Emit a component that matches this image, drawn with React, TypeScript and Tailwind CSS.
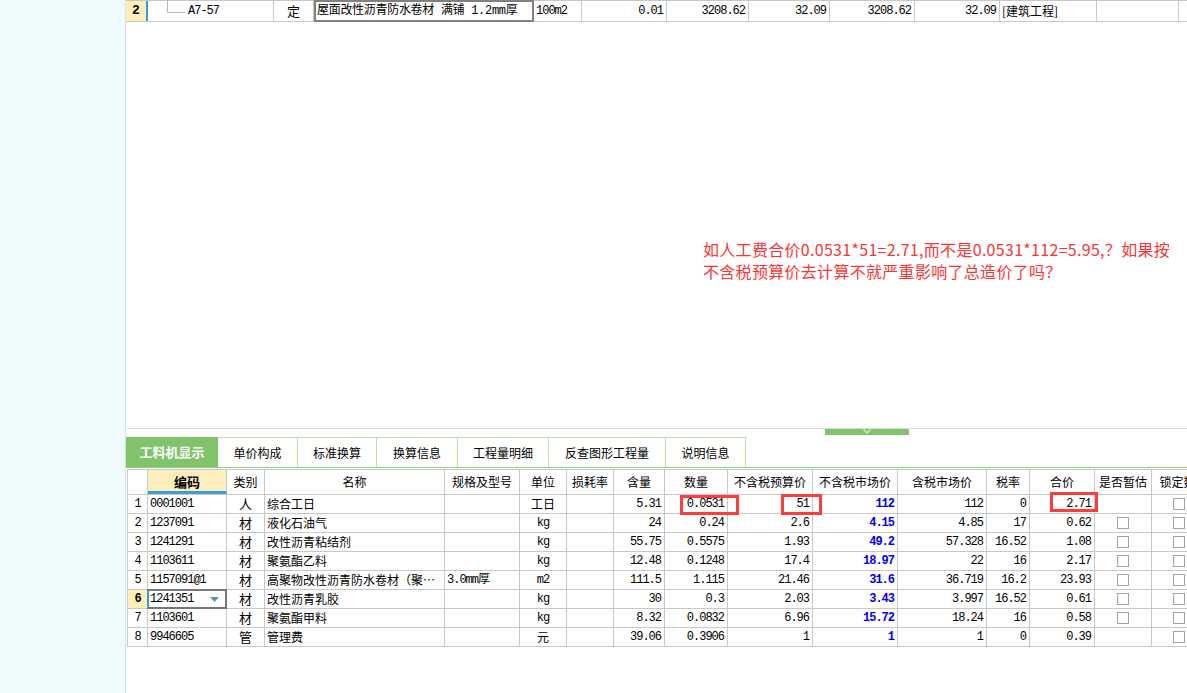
import React from "react";

const cjk = "font-['Noto_Sans_CJK_SC',sans-serif]";
const mono = "font-['Liberation_Mono','Noto_Sans_CJK_SC',monospace] text-[12px] tracking-[-1px]";
const line = "border-[#c8c8c8]";

type Row = {
  n: number;
  code: string;
  type: string;
  name: string;
  spec: string;
  unit: string;
  hl: string;
  qty: string;
  budget: string;
  market: string;
  taxMarket: string;
  rate: string;
  total: string;
  est: boolean;
};

const rows: Row[] = [
  { n: 1, code: "0001001", type: "人", name: "综合工日", spec: "", unit: "工日", hl: "5.31", qty: "0.0531", budget: "51", market: "112", taxMarket: "112", rate: "0", total: "2.71", est: false },
  { n: 2, code: "1237091", type: "材", name: "液化石油气", spec: "", unit: "kg", hl: "24", qty: "0.24", budget: "2.6", market: "4.15", taxMarket: "4.85", rate: "17", total: "0.62", est: true },
  { n: 3, code: "1241291", type: "材", name: "改性沥青粘结剂", spec: "", unit: "kg", hl: "55.75", qty: "0.5575", budget: "1.93", market: "49.2", taxMarket: "57.328", rate: "16.52", total: "1.08", est: true },
  { n: 4, code: "1103611", type: "材", name: "聚氨酯乙料", spec: "", unit: "kg", hl: "12.48", qty: "0.1248", budget: "17.4", market: "18.97", taxMarket: "22", rate: "16", total: "2.17", est: true },
  { n: 5, code: "1157091@1", type: "材", name: "高聚物改性沥青防水卷材（聚…", spec: "3.0mm厚", unit: "m2", hl: "111.5", qty: "1.115", budget: "21.46", market: "31.6", taxMarket: "36.719", rate: "16.2", total: "23.93", est: true },
  { n: 6, code: "1241351", type: "材", name: "改性沥青乳胶", spec: "", unit: "kg", hl: "30", qty: "0.3", budget: "2.03", market: "3.43", taxMarket: "3.997", rate: "16.52", total: "0.61", est: true },
  { n: 7, code: "1103601", type: "材", name: "聚氨酯甲料", spec: "", unit: "kg", hl: "8.32", qty: "0.0832", budget: "6.96", market: "15.72", taxMarket: "18.24", rate: "16", total: "0.58", est: true },
  { n: 8, code: "9946605", type: "管", name: "管理费", spec: "", unit: "元", hl: "39.06", qty: "0.3906", budget: "1", market: "1", taxMarket: "1", rate: "0", total: "0.39", est: false },
];

const headers = [
  { w: "w-[20px]", t: "" },
  { w: "w-[79px]", t: "编码" },
  { w: "w-[38px]", t: "类别" },
  { w: "w-[180px]", t: "名称" },
  { w: "w-[75px]", t: "规格及型号" },
  { w: "w-[47px]", t: "单位" },
  { w: "w-[47px]", t: "损耗率" },
  { w: "w-[51px]", t: "含量" },
  { w: "w-[63px]", t: "数量" },
  { w: "w-[85px]", t: "不含税预算价" },
  { w: "w-[85px]", t: "不含税市场价" },
  { w: "w-[89px]", t: "含税市场价" },
  { w: "w-[43px]", t: "税率" },
  { w: "w-[65px]", t: "合价" },
  { w: "w-[57px]", t: "是否暂估" },
  { w: "w-[64px]", t: "锁定数量" },
];

const tabs = [
  { t: "单价构成", w: "w-[80px]" },
  { t: "标准换算", w: "w-[79px]" },
  { t: "换算信息", w: "w-[81px]" },
  { t: "工程量明细", w: "w-[91px]" },
  { t: "反查图形工程量", w: "w-[117px]" },
  { t: "说明信息", w: "w-[80px]" },
];

function Check() {
  return <div className="w-[12px] h-[12px] border border-[#a3a3a3] bg-white" />;
}

function Num({ w, v, className = "" }: { w: string; v: string; className?: string }) {
  return (
    <div className={`${w} shrink-0 border-r ${line} flex items-center justify-end pr-[3px] ${mono} ${className}`}>
      {v}
    </div>
  );
}

function DataRow({ r }: { r: Row }) {
  const sel = r.n === 6;
  return (
    <div className={`flex h-[19px] border-b ${line} text-[12px] text-black`}>
      <div className={`w-[20px] shrink-0 border-r ${line} flex items-center justify-center ${mono} ${sel ? "bg-[#fdeebb] font-bold" : ""}`}>
        {r.n}
      </div>
      <div className={`relative w-[79px] shrink-0 border-r ${line} flex items-center pl-[2px] ${mono}`}>
        {r.code}
        {sel && (
          <>
            <div className="absolute -top-px -left-px -right-px -bottom-px border-2 border-[#777] border-l-[#3b9ad9]" />
            <svg className="absolute right-[7px] top-[7px]" width="9" height="5" viewBox="0 0 9 5">
              <path d="M0 0 H9 L4.5 5 Z" fill="#4f93cf" />
            </svg>
          </>
        )}
      </div>
      <div className={`w-[38px] shrink-0 border-r ${line} flex items-center justify-center text-[13px] ${cjk}`}>{r.type}</div>
      <div className={`w-[180px] shrink-0 border-r ${line} flex items-center pl-[2px] whitespace-nowrap overflow-hidden ${cjk}`}>{r.name}</div>
      <div className={`w-[75px] shrink-0 border-r ${line} flex items-center pl-[2px] ${mono}`}>{r.spec}</div>
      <div className={`w-[47px] shrink-0 border-r ${line} flex items-center justify-center ${r.unit === "kg" || r.unit === "m2" ? mono : cjk + " text-[12px]"}`}>{r.unit}</div>
      <div className={`w-[47px] shrink-0 border-r ${line}`} />
      <Num w="w-[51px]" v={r.hl} />
      <Num w="w-[63px]" v={r.qty} />
      <Num w="w-[85px]" v={r.budget} />
      <Num w="w-[85px]" v={r.market} className="text-[#0000ff] font-bold" />
      <Num w="w-[89px]" v={r.taxMarket} />
      <Num w="w-[43px]" v={r.rate} />
      <Num w="w-[65px]" v={r.total} />
      <div className={`w-[57px] shrink-0 border-r ${line} flex items-center justify-center`}>{r.est && <Check />}</div>
      <div className={`w-[64px] shrink-0 border-r ${line} flex items-center pl-[21px]`}>
        <Check />
      </div>
    </div>
  );
}

export default function App() {
  return (
    <div className={`w-[1187px] h-[693px] overflow-hidden flex bg-white ${cjk}`}>
      {/* left panel */}
      <div className="w-[126px] shrink-0 bg-[#f0fbfd] border-r border-[#d4e2e6]" />

      <div className="flex-1 flex flex-col min-w-0">
        {/* top quota row */}
        <div className={`flex h-[22px] border-t border-b ${line} text-[12px] text-black shrink-0`}>
          <div className="w-[20px] shrink-0 bg-[#fdeebb] flex items-center justify-center font-bold text-[13px] font-['Liberation_Mono',monospace]">2</div>
          <div className="w-[2px] shrink-0 bg-[#3b9ad9]" />
          <div className={`relative w-[126px] shrink-0 border-r ${line} flex items-center pl-[40px] ${mono}`}>
            <svg className="absolute left-[19px] top-[-1px]" width="20" height="14" viewBox="0 0 20 14">
              <path d="M0.5 0 V12.5 H18" stroke="#b5b5b5" fill="none" />
            </svg>
            A7-57
          </div>
          <div className={`w-[40px] shrink-0 border-r ${line} flex items-center justify-center text-[13px]`}>定</div>
          <div className="relative w-[220px] shrink-0 flex items-center pl-[3px] whitespace-nowrap font-['Liberation_Mono','Noto_Sans_CJK_SC',monospace] text-[12px] tracking-[-0.3px]">
            屋面改性沥青防水卷材 满铺 1.2mm厚
            <div className="absolute -top-px left-0 right-0 -bottom-px border-2 border-[#808080]" />
          </div>
          <div className={`w-[48px] shrink-0 border-r ${line} flex items-center pl-[2px] ${mono}`}>100m2</div>
          <Num w="w-[85px]" v="0.01" />
          <Num w="w-[82px]" v="3208.62" />
          <Num w="w-[81px]" v="32.09" />
          <Num w="w-[85px]" v="3208.62" />
          <Num w="w-[85px]" v="32.09" />
          <div className={`w-[97px] shrink-0 border-r ${line} flex items-center pl-[2px] whitespace-nowrap`}>[建筑工程]</div>
          <div className={`w-[82px] shrink-0 border-r ${line}`} />
          <div className="flex-1" />
        </div>

        {/* empty area with annotation */}
        <div className="h-[406px] shrink-0 pl-[577px] pt-[216px]">
          <p className="text-[16px] leading-[22px] tracking-[0.3px] text-[#ff3333] whitespace-nowrap">
            如人工费合价0.0531*51=2.71,而不是0.0531*112=5.95,？如果按
            <br />
            不含税预算价去计算不就严重影响了总造价了吗？
          </p>
        </div>

        {/* splitter */}
        <div className="h-[7px] shrink-0 border-t border-[#dedede] pl-[699px]">
          <div className="w-[84px] h-[6px] bg-[#80c36b] flex justify-center">
            <svg width="10" height="6" viewBox="0 0 10 6">
              <path d="M1.5 0.5 L5 4 L8.5 0.5" stroke="#cfe9c6" strokeWidth="1.5" fill="none" />
            </svg>
          </div>
        </div>

        {/* tabs */}
        <div className="mt-[2px] h-[31px] shrink-0 flex border-b border-[#8fcc7c] text-[12px]">
          <div className="w-[92px] shrink-0 bg-[#80c36b] text-white font-bold text-[13px] flex items-center justify-center">
            工料机显示
          </div>
          {tabs.map((t) => (
            <div
              key={t.t}
              className={`${t.w} shrink-0 border-t border-r border-[#b9e2ab] flex items-center justify-center text-black`}
            >
              {t.t}
            </div>
          ))}
        </div>

        {/* material table */}
        <div className="relative ml-px mt-px">
          <div className={`flex h-[26px] border-t border-b border-l ${line} text-[12px] text-black`}>
            {headers.map((h, i) => (
              <div
                key={i}
                className={`${h.w} shrink-0 border-r ${line} flex items-center justify-center whitespace-nowrap overflow-hidden ${
                  i === 1 ? "bg-[#fdefbd] font-bold text-[13px] border-b-[3px] border-b-[#3a9fd8] pt-[2px]" : ""
                }`}
              >
                {h.t}
              </div>
            ))}
          </div>
          <div className={`border-l ${line}`}>
            {rows.map((r) => (
              <DataRow key={r.n} r={r} />
            ))}
          </div>

          {/* red highlight boxes */}
          <div className="absolute left-[553px] top-[26px] w-[59px] h-[20px] border-[3px] border-[#ff3b3b]" />
          <div className="absolute left-[654px] top-[25px] w-[41px] h-[21px] border-[3px] border-[#ff3b3b]" />
          <div className="absolute left-[923px] top-[23px] w-[48px] h-[20px] border-[3px] border-[#ff3b3b]" />
        </div>
      </div>
    </div>
  );
}
